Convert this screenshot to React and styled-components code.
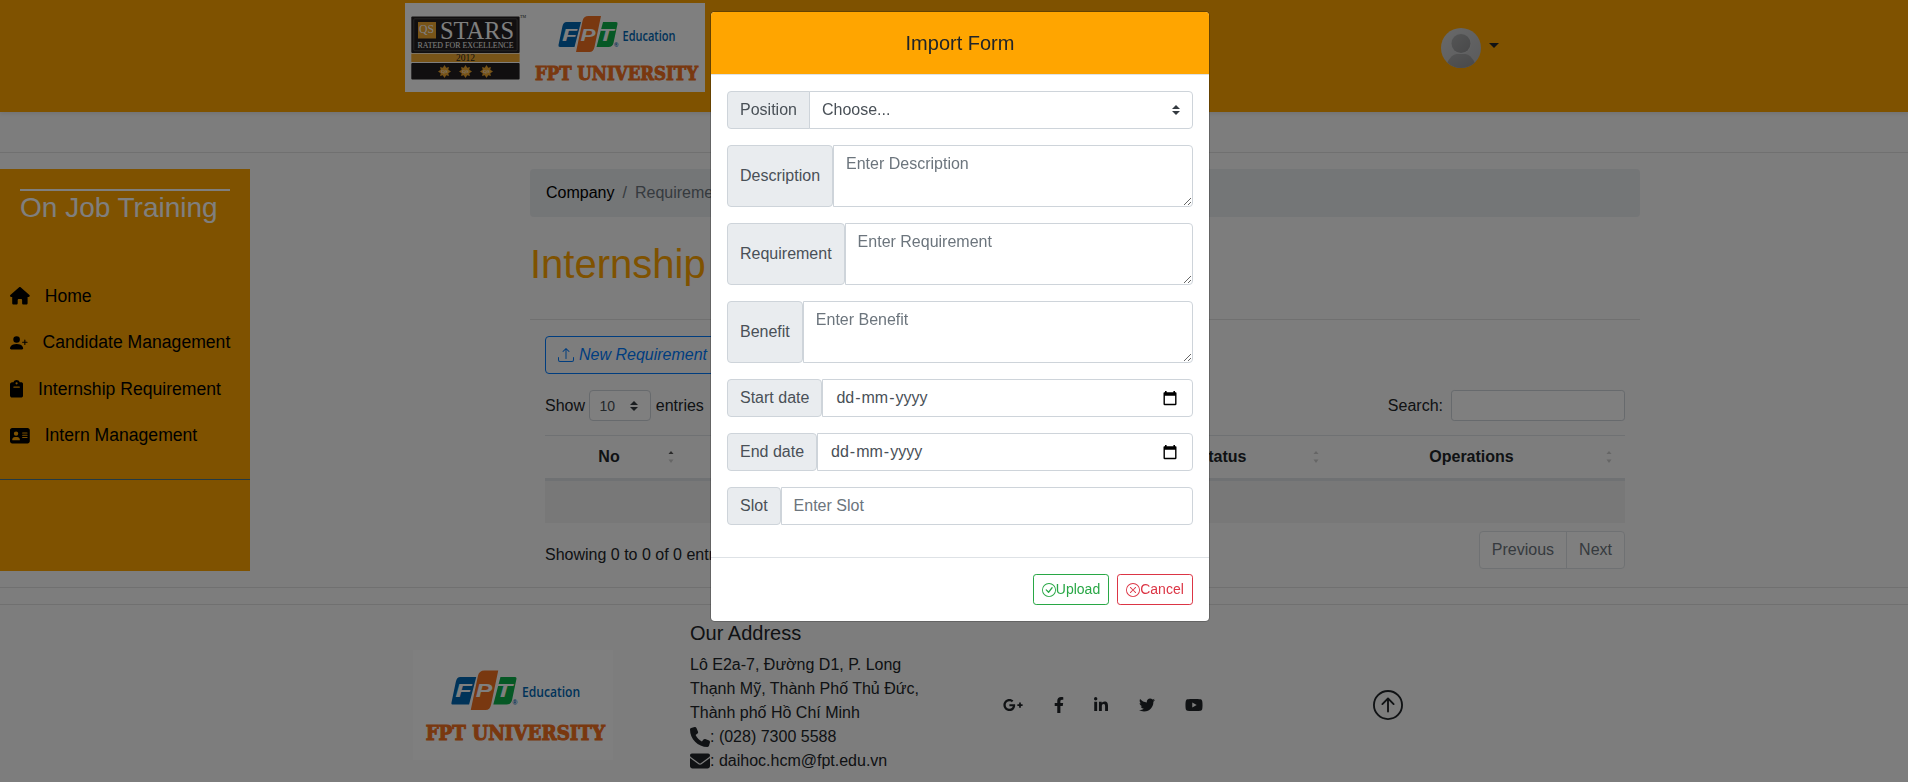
import React from "react";
import styled, { createGlobalStyle, css } from "styled-components";
import { FaHouse, FaClipboard, FaAddressCard, FaPhone, FaEnvelope } from "react-icons/fa6";
import { FaGooglePlusG, FaFacebookF, FaLinkedinIn, FaTwitter, FaYoutube } from "react-icons/fa";
import { BsPersonPlusFill, BsUpload, BsArrowUpCircle, BsCheckCircle, BsXCircle } from "react-icons/bs";

const GlobalStyle = createGlobalStyle`
  *, *::before, *::after { box-sizing: border-box; }
  body {
    margin: 0;
    overflow: hidden;
    background: #fafafa;
    color: #212529;
    font: 400 16px/1.5 "Liberation Sans", Arial, sans-serif;
  }
  input, textarea, button { font: inherit; }
`;

const Page = styled.div`
  height: 782px;
  overflow: hidden;
`;

const Header = styled.header`
  display: flex;
  align-items: flex-start;
  height: 112px;
  padding: 3px 0 0 405px;
  background: orange;
  box-shadow: 0 2px 4px rgba(0, 0, 0, 0.08);
`;

const HeaderLogo = styled.svg`
  width: 300px;
  height: 89px;
  background: #fff;
`;

const UserMenu = styled.div`
  display: flex;
  align-items: center;
  gap: 8px;
  margin: 25px 0 0 736px;
`;

const Avatar = styled.svg`
  width: 40px;
  height: 40px;
`;

const Caret = styled.span`
  margin-top: -6px;
  border-top: 5px solid #212529;
  border-left: 5px solid transparent;
  border-right: 5px solid transparent;
`;

const Rule = styled.hr`
  margin: ${(p) => p.$margin};
  border: 0;
  border-top: 1px solid rgba(0, 0, 0, 0.1);
`;

const Columns = styled.div`
  display: flex;
  align-items: flex-start;
  gap: 280px;
  height: 402px;
`;

const Sidebar = styled.nav`
  width: 250px;
  height: 402px;
  background: orange;
`;

const SidebarTitle = styled.h3`
  margin: 20px 20px 29px;
  border-top: 2px solid #fff;
  color: #fff;
  font-size: 28px;
  font-weight: 400;
  line-height: 34px;
`;

const Menu = styled.ul`
  margin: 0;
  padding: 19px 0 20px;
  border-bottom: 1px solid #47748b;
  list-style: none;
`;

const MenuItem = styled.li`
  display: flex;
  align-items: center;
  gap: 14.9px;
  height: 46.4px;
  padding: 0 10px;
  color: #000;
  font-size: 17.6px;
  white-space: nowrap;
`;

const Main = styled.main`
  width: 1110px;
`;

const Breadcrumb = styled.div`
  display: flex;
  gap: 8px;
  height: 48px;
  padding: 12px 16px;
  border-radius: 4px;
  background: #e9ecef;
  color: #6c757d;
`;

const Crumb = styled.a`
  color: #000;
`;

const Title = styled.h1`
  margin: 23px 0 31px;
  color: orange;
  font-size: 40px;
  font-weight: 400;
  line-height: 48px;
`;

const Panel = styled.section`
  padding: 16px 15px 0;
`;

const NewButton = styled.button`
  display: flex;
  align-items: center;
  gap: 5px;
  height: 38px;
  padding: 0 12px;
  border: 1px solid #007bff;
  border-radius: 4px;
  background: transparent;
  color: #007bff;
  font-style: italic;
`;

const Controls = styled.div`
  display: flex;
  justify-content: space-between;
  margin: 16px 0 14px;
`;

const ControlLabel = styled.label`
  display: flex;
  align-items: center;
  gap: ${(p) => p.$gap}px;
  height: 31px;
  line-height: 30px;
`;

const PageSize = styled.div`
  display: flex;
  align-items: center;
  justify-content: space-between;
  width: 62px;
  height: 31px;
  padding: 0 12px 0 9px;
  border: 1px solid #ced4da;
  border-radius: 4px;
  background: #fff;
  color: #495057;
  font-size: 14px;
`;

const SearchInput = styled.input`
  width: 174px;
  height: 31px;
  border: 1px solid #ced4da;
  border-radius: 3.2px;
  background: #fff;
`;

const Table = styled.div`
  display: grid;
  grid-template-columns: 142px 1fr 206px 293px;
  border-top: 1px solid #dee2e6;
`;

const HeadCell = styled.div`
  display: flex;
  align-items: center;
  justify-content: space-between;
  height: 45px;
  padding: 0 12px;
  border-bottom: 3px solid #dee2e6;
  font-weight: 700;
`;

const HeadText = styled.span`
  flex: 1;
  padding-right: 6px;
  text-align: center;
`;

const EmptyRow = styled.div`
  grid-column: 1 / -1;
  height: 42px;
  background: #f0f0f0;
`;

const TableFoot = styled.div`
  display: flex;
  align-items: flex-start;
  justify-content: space-between;
  padding-top: 8px;
`;

const Info = styled.div`
  padding-top: 12px;
`;

const Pager = styled.div`
  display: flex;
  border: 1px solid #dee2e6;
  border-radius: 4px;
  background: #fff;
  color: #6c757d;
  line-height: 36px;
`;

const PagerItem = styled.span`
  padding: 0 12px;
  & + & { border-left: 1px solid #dee2e6; }
`;

const Footer = styled.footer`
  display: flex;
  height: 177px;
  padding-left: 413px;
`;

const FooterLogo = styled.svg`
  width: 200px;
  height: 110px;
  margin: 45px 77px 0 0;
  background: #fff;
`;

const Address = styled.div`
  width: 313px;
  padding-top: 16px;
`;

const AddressTitle = styled.h5`
  margin: 0 0 8px;
  font-size: 20px;
  font-weight: 400;
  line-height: 24px;
`;

const AddressLine = styled.div`
  display: flex;
  align-items: center;
  height: 24px;
  white-space: nowrap;
`;

const Social = styled.div`
  display: flex;
  align-items: center;
  gap: 30.5px;
  width: 370px;
  height: 200px;
`;

const ToTop = styled.div`
  display: flex;
  align-items: center;
  height: 200px;
`;

const Backdrop = styled.div`
  position: fixed;
  inset: 0;
  display: flex;
  align-items: flex-start;
  justify-content: center;
  padding: 11px 0 0 12px;
  background: rgba(0, 0, 0, 0.5);
`;

const Dialog = styled.div`
  width: 500px;
  overflow: hidden;
  border: 1px solid rgba(0, 0, 0, 0.2);
  border-radius: 4.8px;
  background: #fff;
  background-clip: padding-box;
`;

const DialogHeader = styled.div`
  height: 63px;
  border-bottom: 1px solid #dee2e6;
  background: orange;
  font-size: 20px;
  line-height: 62px;
  text-align: center;
`;

const DialogBody = styled.div`
  display: flex;
  flex-direction: column;
  gap: 16px;
  padding: 16px 16px 32px;
`;

const Group = styled.div`
  display: flex;
`;

const GroupLabel = styled.span`
  display: flex;
  align-items: center;
  padding: 0 12px;
  border: 1px solid #ced4da;
  border-radius: ${(p) => (p.$joined ? "4px 0 0 4px" : "4px")};
  margin-right: ${(p) => (p.$joined ? "-1px" : "0")};
  background: #e9ecef;
  color: #495057;
  white-space: nowrap;
`;

const control = css`
  flex: 1;
  min-width: 0;
  border: 1px solid #ced4da;
  border-radius: 0 4px 4px 0;
  outline: 0;
  background: #fff;
  color: #495057;
  &::placeholder { color: #6c757d; opacity: 1; }
`;

const TextInput = styled.input`
  ${control}
  height: 38px;
  padding: 6px 12px;
`;

const TextArea = styled.textarea`
  ${control}
  height: 62px;
  padding: 6px 12px;
`;

const Picker = styled.div`
  ${control}
  display: flex;
  align-items: center;
  justify-content: space-between;
  height: 38px;
  padding: 0 ${(p) => (p.$date ? 15 : 12)}px 0 12px;
`;

const DatePart = styled.span`
  padding: 0 1px;
`;

const DialogFooter = styled.div`
  display: flex;
  justify-content: flex-end;
  gap: 8px;
  padding: 16px;
  border-top: 1px solid #dee2e6;
`;

const ActionButton = styled.button`
  display: flex;
  align-items: center;
  justify-content: center;
  width: 76px;
  height: 31px;
  padding: 0;
  border: 1px solid ${(p) => p.$color};
  border-radius: 3.2px;
  background: #fff;
  color: ${(p) => p.$color};
  font-size: 14px;
`;

const SelectArrows = () => (
  <svg width="8" height="10" viewBox="0 0 4 5">
    <path fill="#343a40" d="M2 0L0 2h4zm0 5L0 3h4z" />
  </svg>
);

const SortArrows = ({ ascending }) => (
  <svg width="8" height="14" viewBox="0 0 8 14">
    <path d="M1.500 4L4 1l2.500 3z" fill={ascending ? "#555" : "#ccc"} />
    <path d="M1.500 9.500h5L4 13z" fill="#ccc" />
  </svg>
);

const CalendarIcon = () => (
  <svg width="14" height="15" viewBox="0 0 14 15">
    <path
      fillRule="evenodd"
      d="M2 0h1.600v1.200h6.800V0H12v1.200h.5c.6 0 1 .4 1 1V13c0 .7-.4 1.200-1 1.200h-11c-.6 0-1-.5-1-1.200V2.200c0-.6.4-1 1-1H2zM1.900 4.700v8.100h10.200V4.700z"
      fill="#000"
    />
  </svg>
);

/* FPT Education mark: three slanted tiles above the university name. */
const FptMark = () => (
  <g>
    <path d="M8 6h14.500L16 31H1.500Q-.5 31 0 29L4 10q1-4 4-4z" fill="#0066b3" />
    <path d="M44.500 6h13q2 0 1.500 2l-4 19q-1 4-5 4H38z" fill="#0db14b" />
    <path d="M30 0h12.500L36 31q-1 5-5 5H17.500L24 5q1-5 6-5z" fill="#f37021" />
    <g fill="#fff" fontFamily="Liberation Sans" fontWeight="700" fontStyle="italic" fontSize="16">
      <text x="3.500" y="24.500" textLength="15" lengthAdjust="spacingAndGlyphs">F</text>
      <text x="22" y="24.500" textLength="15" lengthAdjust="spacingAndGlyphs">P</text>
      <text x="40" y="24.500" textLength="15" lengthAdjust="spacingAndGlyphs">T</text>
    </g>
    <text x="55.500" y="31" fontSize="6" fontWeight="700" fill="#0066b3" fontFamily="Liberation Sans">®</text>
    <text x="64" y="24.500" fontSize="13.500" fontWeight="600" fill="#0066b3" fontFamily="Open Sans" textLength="53" lengthAdjust="spacingAndGlyphs">
      Education
    </text>
    <text x="-23.500" y="63.500" fontSize="18.500" fontWeight="700" fill="#f37021" stroke="#f37021" strokeWidth="1" fontFamily="DejaVu Serif" textLength="163" lengthAdjust="spacingAndGlyphs">
      FPT UNIVERSITY
    </text>
  </g>
);

const RatingStar = ({ x }) => (
  <g transform={`translate(${x} 68.500)`}>
    <path d="M0-6.500L1.700-3.800 4.400-4.400 3.800-1.700 6.500 0 3.800 1.700 4.400 4.400 1.700 3.800 0 6.500-1.700 3.800-4.400 4.400-3.800 1.700-6.500 0-3.800-1.700-4.400-4.400-1.700-3.800z" fill="#f0a830" />
    <text y="1.800" textAnchor="middle" fontSize="5" fill="#fff" fontFamily="Liberation Serif">QS</text>
  </g>
);

const QsStars = () => (
  <g fontFamily="Liberation Serif">
    <rect x="6.300" y="13.500" width="108.300" height="36.500" rx="1" fill="#231f20" />
    <rect x="8.800" y="15.800" width="103.300" height="32" rx="1" fill="none" stroke="#666" strokeWidth=".6" />
    <rect x="13" y="19" width="18" height="16.500" fill="#f0a830" />
    <text x="14" y="30" fontSize="13" fill="#fff" textLength="15" lengthAdjust="spacingAndGlyphs">QS</text>
    <text x="35" y="35.500" fontSize="25" fill="#fff" textLength="74" lengthAdjust="spacingAndGlyphs">STARS</text>
    <text x="12.500" y="45" fontSize="8" fill="#fff" textLength="96" lengthAdjust="spacingAndGlyphs">RATED FOR EXCELLENCE</text>
    <rect x="6.300" y="50.700" width="108.300" height="8.300" fill="#f0a830" />
    <text x="60.500" y="58" textAnchor="middle" fontSize="9.500" fill="#231f20">2012</text>
    <rect x="6.300" y="60" width="108.300" height="16.500" rx="1" fill="#231f20" />
    <RatingStar x={39.5} />
    <RatingStar x={60.5} />
    <RatingStar x={81.5} />
    <text x="115" y="15" fontSize="4" fill="#231f20">TM</text>
  </g>
);

const UserPicture = () => (
  <Avatar viewBox="0 0 40 40">
    <defs>
      <clipPath id="avatar-clip"><circle cx="20" cy="20" r="20" /></clipPath>
      <linearGradient id="avatar-shade" x1="0" y1="0" x2="1" y2="1">
        <stop offset="0" stopColor="#d2d3d4" />
        <stop offset="1" stopColor="#b4b5b7" />
      </linearGradient>
      <linearGradient id="figure-shade" x1="0" y1="0" x2="1" y2="1">
        <stop offset="0" stopColor="#aaabac" />
        <stop offset="1" stopColor="#919294" />
      </linearGradient>
    </defs>
    <g clipPath="url(#avatar-clip)">
      <rect width="40" height="40" fill="url(#avatar-shade)" />
      <path d="M5.500 36q5-10 10-10h9q5 0 10 10v4h-29z" fill="url(#figure-shade)" />
      <circle cx="20" cy="15.500" r="10.300" fill="#c6c7c9" />
      <circle cx="20" cy="15.500" r="9.500" fill="url(#figure-shade)" />
    </g>
  </Avatar>
);

const menu = [
  { text: "Home", icon: <FaHouse size="17.600" style={{ width: 19.8 }} /> },
  { text: "Candidate Management", icon: <BsPersonPlusFill size="17.600" /> },
  { text: "Internship Requirement", icon: <FaClipboard size="17.600" style={{ width: 13.2 }} /> },
  { text: "Intern Management", icon: <FaAddressCard size="17.600" style={{ width: 19.8 }} /> },
];

const DateField = ({ label }) => (
  <Group>
    <GroupLabel>{label}</GroupLabel>
    <Picker $date>
      <span>
        <DatePart>dd</DatePart>-<DatePart>mm</DatePart>-<DatePart>yyyy</DatePart>
      </span>
      <CalendarIcon />
    </Picker>
  </Group>
);

export default function App() {
  return (
    <>
      <GlobalStyle />
      <Page>
        <Header>
          <HeaderLogo viewBox="0 0 300 89">
            <QsStars />
            <g transform="translate(153.500 13)"><FptMark /></g>
          </HeaderLogo>
          <UserMenu>
            <UserPicture />
            <Caret />
          </UserMenu>
        </Header>
        <Rule $margin="40px 0 16px" />
        <Columns>
          <Sidebar>
            <SidebarTitle>On Job Training</SidebarTitle>
            <Menu>
              {menu.map((m) => (
                <MenuItem key={m.text}>{m.icon}{m.text}</MenuItem>
              ))}
            </Menu>
          </Sidebar>
          <Main>
            <Breadcrumb>
              <Crumb>Company</Crumb>
              <span>/</span>
              <span>Requirement</span>
            </Breadcrumb>
            <Title>Internship Requirement</Title>
            <Rule $margin="0" />
            <Panel>
              <NewButton><BsUpload size="16" />New Requirement</NewButton>
              <Controls>
                <ControlLabel $gap={4.4}>
                  Show
                  <PageSize>10<SelectArrows /></PageSize>
                  entries
                </ControlLabel>
                <ControlLabel $gap={8}>Search:<SearchInput /></ControlLabel>
              </Controls>
              <Table>
                <HeadCell><HeadText>No</HeadText><SortArrows ascending /></HeadCell>
                <HeadCell />
                <HeadCell><HeadText>Status</HeadText><SortArrows /></HeadCell>
                <HeadCell><HeadText>Operations</HeadText><SortArrows /></HeadCell>
                <EmptyRow />
              </Table>
              <TableFoot>
                <Info>Showing 0 to 0 of 0 entries</Info>
                <Pager>
                  <PagerItem>Previous</PagerItem>
                  <PagerItem>Next</PagerItem>
                </Pager>
              </TableFoot>
            </Panel>
          </Main>
        </Columns>
        <Rule $margin="16px 0" />
        <Rule $margin="0" />
        <Footer>
          <FooterLogo viewBox="0 0 200 110">
            <g transform="translate(38.500 20.500) scale(1.1)"><FptMark /></g>
          </FooterLogo>
          <Address>
            <AddressTitle>Our Address</AddressTitle>
            <AddressLine>Lô E2a-7, Đường D1, P. Long</AddressLine>
            <AddressLine>Thạnh Mỹ, Thành Phố Thủ Đức,</AddressLine>
            <AddressLine>Thành phố Hồ Chí Minh</AddressLine>
            <AddressLine><FaPhone size="20" />: (028) 7300 5588</AddressLine>
            <AddressLine><FaEnvelope size="20" />: daihoc.hcm@fpt.edu.vn</AddressLine>
          </Address>
          <Social>
            <FaGooglePlusG size="20" />
            <FaFacebookF size="16" style={{ width: 10 }} />
            <FaLinkedinIn size="16" style={{ width: 14 }} />
            <FaTwitter size="16" />
            <FaYoutube size="18" />
          </Social>
          <ToTop><BsArrowUpCircle size="30" /></ToTop>
        </Footer>
      </Page>
      <Backdrop>
        <Dialog>
          <DialogHeader>Import Form</DialogHeader>
          <DialogBody>
            <Group>
              <GroupLabel $joined>Position</GroupLabel>
              <Picker>Choose...<SelectArrows /></Picker>
            </Group>
            {["Description", "Requirement", "Benefit"].map((name) => (
              <Group key={name}>
                <GroupLabel>{name}</GroupLabel>
                <TextArea placeholder={`Enter ${name}`} />
              </Group>
            ))}
            <DateField label="Start date" />
            <DateField label="End date" />
            <Group>
              <GroupLabel>Slot</GroupLabel>
              <TextInput placeholder="Enter Slot" />
            </Group>
          </DialogBody>
          <DialogFooter>
            <ActionButton $color="#28a745"><BsCheckCircle size="14" />Upload</ActionButton>
            <ActionButton $color="#dc3545"><BsXCircle size="14" />Cancel</ActionButton>
          </DialogFooter>
        </Dialog>
      </Backdrop>
    </>
  );
}
